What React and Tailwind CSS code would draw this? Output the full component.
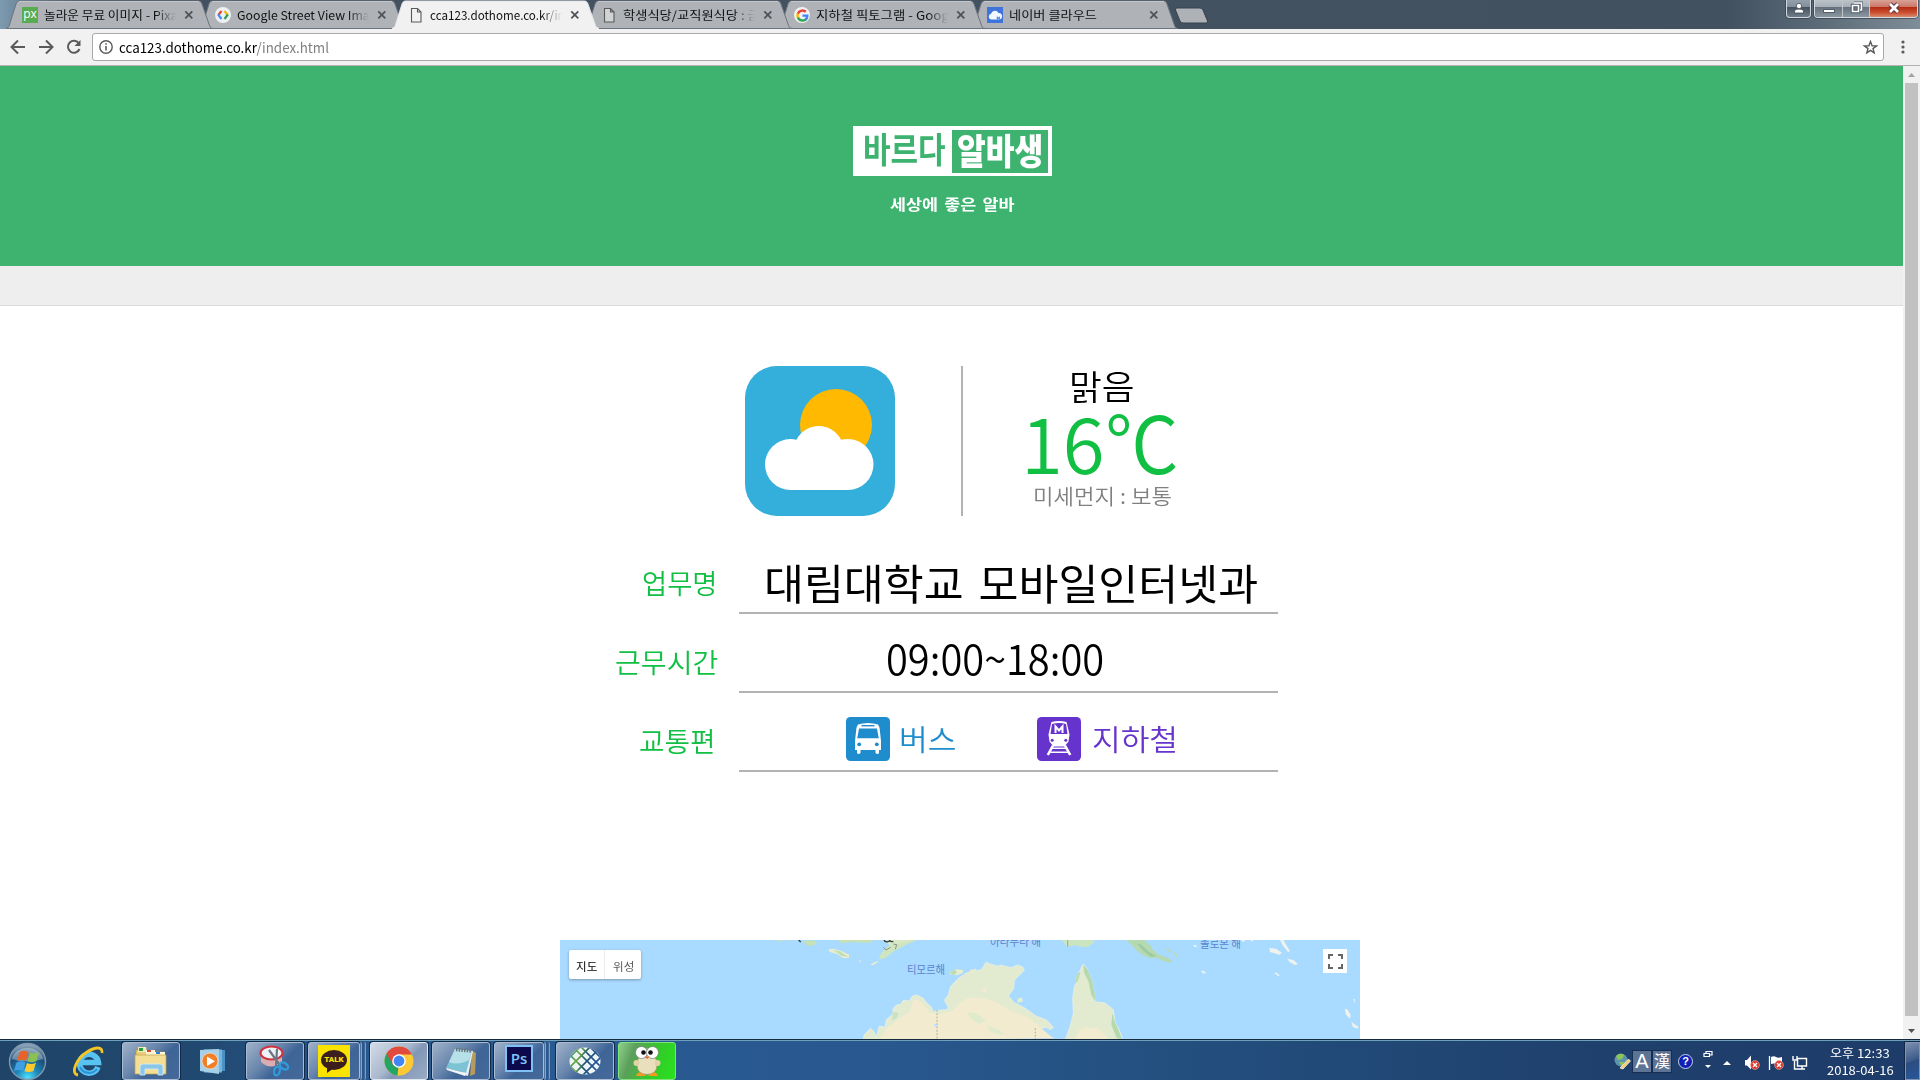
import { useLayoutEffect, useRef, useState } from "react";

const KR = "font-['Noto_Sans_CJK_KR',sans-serif]";

/* Text stretched or condensed to a fixed advance width. */
function Fit({ w, className = "", children }) {
  const ref = useRef(null);
  const [scale, setScale] = useState(1);
  useLayoutEffect(() => {
    setScale(w / ref.current.offsetWidth);
  }, [w]);
  return (
    <span className="flex shrink-0 items-start" style={{ width: w }}>
      <span
        ref={ref}
        className={`block shrink-0 origin-left whitespace-nowrap ${className}`}
        style={{ transform: `scaleX(${scale})` }}
      >
        {children}
      </span>
    </span>
  );
}

/* ---------- browser chrome ---------- */

const PageIcon = () => (
  <svg width="16" height="16" viewBox="0 0 16 16" fill="#f4f4f4" fillOpacity=".5" stroke="#5a5a5a" strokeWidth="1.1">
    <path d="M3.500 1.500h6l3.500 3.500v10h-9.500zM9.500 1.500v3.500h3.500" />
  </svg>
);

const GoogleG = ({ s = 14 }) => (
  <svg width={s} height={s} viewBox="0 0 24 24">
    <path fill="#4285f4" d="M23 12.300c0-.8-.1-1.600-.2-2.300H12v4.500h6.200a5.300 5.300 0 0 1-2.300 3.500v2.900h3.700c2.200-2 3.400-5 3.400-8.600z" />
    <path fill="#34a853" d="M12 23.500c3.100 0 5.700-1 7.600-2.800L15.900 18c-1 .7-2.300 1.100-3.900 1.100-3 0-5.500-2-6.400-4.700H1.800v3A11.500 11.500 0 0 0 12 23.500z" />
    <path fill="#fbbc05" d="M5.600 14.300a7 7 0 0 1 0-4.500v-3H1.800a11.500 11.500 0 0 0 0 10.400z" />
    <path fill="#ea4335" d="M12 5c1.700 0 3.200.6 4.400 1.700l3.300-3.300A11.500 11.500 0 0 0 1.800 6.800l3.800 3C6.500 7.100 9 5 12 5z" />
  </svg>
);

const tabs = [
  {
    title: "놀라운 무료 이미지 - Pixabay",
    w: 155,
    icon: (
      <span className="flex h-4 w-4 items-center justify-center bg-[#59ab52] pb-[2px] font-['Open_Sans',sans-serif] text-[12px] leading-none text-white">
        px
      </span>
    ),
  },
  {
    title: "Google Street View Image",
    w: 146,
    icon: (
      <svg width="16" height="16" viewBox="0 0 16 16" fill="none" strokeWidth="2.200">
        <circle cx="8" cy="8" r="8" fill="#eef1f3" />
        <path d="M6.500 4L3.300 8" stroke="#dd4b39" />
        <path d="M3.100 7.500L6.500 12" stroke="#4a8bf5" />
        <path d="M9.500 4l3.200 4" stroke="#f5b50a" />
        <path d="M12.900 7.500L9.500 12" stroke="#2aa15d" />
      </svg>
    ),
  },
  { title: "cca123.dothome.co.kr/index", w: 154, icon: <PageIcon />, active: true },
  { title: "학생식당/교직원식당 : 금", w: 137, icon: <PageIcon /> },
  {
    title: "지하철 픽토그램 - Google",
    w: 144,
    icon: (
      <span className="flex h-4 w-4 items-center justify-center rounded-full bg-[#f0f2f3]">
        <GoogleG s={13} />
      </span>
    ),
  },
  {
    title: "네이버 클라우드",
    w: 88,
    icon: (
      <svg width="16" height="16" viewBox="0 0 16 16">
        <rect width="16" height="16" fill="#3f74dc" />
        <path d="M4 12.500a3 3 0 0 1 0-5.800 4 4 0 0 1 7.500-.7 3.300 3.300 0 0 1 1 6.500z" fill="#f2f8ff" />
        <path d="M10.300 12.500V9.800l2 2.500V9.600" stroke="#3f74dc" fill="none" />
      </svg>
    ),
  },
];

const zs = ["z-[6]", "z-[5]", "z-[8]", "z-[3]", "z-[2]", "z-[1]"];

function Tab({ tab, i }) {
  return (
    <div className={`relative -mr-[14px] h-[29px] w-[207px] shrink-0 ${zs[i]}`}>
      <svg className="absolute inset-0" width="207" height="29" viewBox="0 0 207 29">
        <path
          d="M0 28.500C3 28 3 26 4 23L10 4C11 1.500 12 1 14 1H192C194 1 195 1.500 196 4L203 24C204 26.500 204 28 207 28.500Z"
          fill={tab.active ? "#f2f1f2" : "#afb2b6"}
          stroke={tab.active ? "#e4e5e7" : "#6c737c"}
          strokeWidth="1"
        />
        {!tab.active && <path d="M13 1.500H193" stroke="#c3c6ca" />}
        {tab.active && <path d="M1 28.500H206" stroke="#f2f1f2" strokeWidth="2" />}
      </svg>
      <div className="relative flex h-[29px] items-center pl-4">
        <div className="w-[22px] pt-px">{tab.icon}</div>
        <div className="w-[132px] overflow-hidden [mask-image:linear-gradient(to_right,black_84%,transparent)]">
          <Fit w={tab.w} className="text-[12px] leading-[19px] text-[#111]">
            {tab.title}
          </Fit>
        </div>
        <svg className="ml-[8px] mt-px" width="10" height="10" viewBox="0 0 10 10" stroke="#4f5358" strokeWidth="1.800">
          <path d="M1.300 1.300l7 7M8.300 1.300l-7 7" />
        </svg>
      </div>
    </div>
  );
}

function TitleBar() {
  return (
    <div className="flex h-[29px] justify-between bg-[linear-gradient(90deg,#7d9ab0_0,#435261_4%,#425160_90%,#5c6c79_95%,#7f8d98_100%)]">
      <div className="flex pl-[6px]">
        {tabs.map((t, i) => (
          <Tab key={t.title} tab={t} i={i} />
        ))}
        <svg className="ml-[9px] mt-[7px]" width="36" height="18" viewBox="0 0 36 18">
          <path d="M4 1H27q2 0 3 2l4.500 11q.8 2-1.500 2H10q-2 0-3-2L2.500 3q-.8-2 1.500-2z" fill="#aeb1b6" stroke="#36424e" strokeWidth="1" />
        </svg>
      </div>
      <div className="flex gap-[3px] pr-[2px]">
        <div className="flex h-[18px] w-[25px] items-center justify-center rounded-b-[4px] border border-t-0 border-[#d3d9de] bg-[linear-gradient(#94a0aa_0,#828e99_42%,#45525f_43%,#717e8a_100%)] pb-[2px] ring-1 ring-[#2d3843]/60">
          <svg width="12" height="12" viewBox="0 0 12 12" fill="#fff" stroke="#3f4853" strokeWidth=".8">
            <path d="M1.500 11V8.500Q3 7 6 7t4.500 1.500V11z" />
            <circle cx="6" cy="4" r="2.700" />
          </svg>
        </div>
        <div className="flex h-[18px] w-[104px] overflow-hidden rounded-b-[4px] border border-t-0 border-[#d3d9de] ring-1 ring-[#2d3843]/60">
          <div className="flex w-[28px] items-end justify-center border-r border-[#c0c8ce] bg-[linear-gradient(#bcc3c9_0,#a6afb7_42%,#66737f_43%,#8a96a0_100%)] pb-[4px]">
            <span className="h-[4px] w-[12px] border border-[#555f6b] bg-white" />
          </div>
          <div className="flex w-[27px] items-center justify-center border-r border-[#c0c8ce] bg-[linear-gradient(#bcc3c9_0,#a6afb7_42%,#66737f_43%,#8a96a0_100%)] pb-[2px]">
            <svg width="13" height="13" viewBox="0 0 13 13" fill="none">
              <path d="M4 2h7.500v7H10" stroke="#505b68" strokeWidth="3" />
              <path d="M2.500 4.500h6v6h-6z" stroke="#505b68" strokeWidth="3.400" />
              <path d="M4 2h7.500v7H10M2.500 4.500h6v6h-6z" stroke="#fff" strokeWidth="1.600" />
            </svg>
          </div>
          <div className="flex flex-1 items-center justify-center bg-[linear-gradient(#d9a297_0,#cb7566_42%,#b42b14_43%,#cc5131_75%,#d98a6f_100%)] pb-[2px]">
            <svg width="14" height="12" viewBox="0 0 14 12">
              <path d="M3 2l8 8M11 2l-8 8" stroke="#58363a" strokeWidth="4.600" />
              <path d="M3 2l8 8M11 2l-8 8" stroke="#fff" strokeWidth="2.800" />
            </svg>
          </div>
        </div>
      </div>
    </div>
  );
}

function Toolbar() {
  return (
    <div className="flex h-[37px] items-center border-b border-[#b4b2b4] bg-[#f2f1f2]">
      <svg className="ml-[10px] shrink-0" width="74" height="18" viewBox="0 0 74 18" fill="none" stroke="#5a5a5a" strokeWidth="2">
        <path d="M15 9H2M8 2.500L1.500 9 8 15.500" />
        <path d="M29 9h13.500M36 2.500L42.500 9l-6.500 6.500" />
        <path d="M69 5.500A6 6 0 1 0 69.500 11" />
        <path d="M70.500 2v6h-6z" fill="#5a5a5a" stroke="none" />
      </svg>
      <div className="ml-[8px] flex h-[28px] w-[1792px] items-center rounded-[3px] border border-[#a9a7a9] bg-white pl-[6px]">
        <svg width="14" height="14" viewBox="0 0 14 14" fill="none" stroke="#5a5a5a" strokeWidth="1.400">
          <circle cx="7" cy="7" r="6.200" />
          <path d="M7 6v4.500M7 3.300v1.500" strokeWidth="1.600" />
        </svg>
        <div className="ml-[6px] flex-1">
          <Fit w={210} className="text-[14px] leading-[20px] text-black">
            cca123.dothome.co.kr<span className="text-[#808080]">/index.html</span>
          </Fit>
        </div>
        <svg className="mr-[5px]" width="15" height="15" viewBox="0 0 15 15" fill="none" stroke="#5a5a5a" strokeWidth="1.400">
          <path d="M7.500 1.500l1.600 4.200 4.400.2-3.500 2.700 1.200 4.300-3.700-2.500-3.700 2.500L5 8.600 1.500 5.900l4.400-.2z" />
        </svg>
      </div>
      <svg className="ml-[17px]" width="4" height="14" viewBox="0 0 4 14" fill="#5a5a5a">
        <circle cx="2" cy="2" r="1.600" />
        <circle cx="2" cy="7" r="1.600" />
        <circle cx="2" cy="12" r="1.600" />
      </svg>
    </div>
  );
}

function Scrollbar() {
  return (
    <div className="flex w-[17px] shrink-0 flex-col items-center bg-[#f1f1f1]">
      <div className="flex h-[17px] items-center">
        <svg width="7" height="4" viewBox="0 0 7 4" fill="#a3a3a3">
          <path d="M0 4L3.500 0 7 4z" />
        </svg>
      </div>
      <div className="h-[933px] w-[13px] bg-[#c1c1c1]" />
      <div className="mt-auto flex h-[17px] items-center">
        <svg width="7" height="4" viewBox="0 0 7 4" fill="#505050">
          <path d="M0 0L3.500 4 7 0z" />
        </svg>
      </div>
    </div>
  );
}

/* ---------- page ---------- */

function Hero() {
  return (
    <>
      <header className="flex h-[200px] flex-col items-center bg-[#3eb370] pt-[60px]">
        <div className="ml-[2px] flex h-[50px] w-[199px] items-center bg-white">
          <div className="flex w-[99px] pb-[6px] pl-[10px]">
            <Fit w={83} className="text-[35px] font-bold leading-[42px] text-[#3eb370]">
              바르다
            </Fit>
          </div>
          <div className="flex h-[43px] w-[96px] items-center bg-[#3eb370] pb-[5px] pl-[5px]">
            <Fit w={86} className="text-[36px] font-black leading-[38px] text-white">
              알바생
            </Fit>
          </div>
        </div>
        <div className="mt-[16px]">
          <Fit w={124} className="text-[15px] font-bold leading-[24px] text-white [word-spacing:2px]">
            세상에 좋은 알바
          </Fit>
        </div>
      </header>
      <div className="h-[40px] border-b border-[#dcdcdc] bg-[#eeeeee]" />
    </>
  );
}

function Weather() {
  return (
    <section className="flex pl-[745px] pt-[60px]">
      <svg width="150" height="150" viewBox="0 0 150 150">
        <rect width="150" height="150" rx="32" fill="#34aeda" />
        <circle cx="91" cy="59" r="36" fill="#ffb900" />
        <path d="M45.500 124a25.500 25.500 0 0 1 0-51q3 0 6 .7a25 25 0 0 1 44.500 0q3-.7 7-.7a25.500 25.500 0 0 1 0 51z" fill="#fff" />
      </svg>
      <div className="ml-[66px] h-[150px] w-[2px] bg-[#b3b3b3]" />
      <div className="flex flex-col">
        <div className="ml-[106px] h-[47px]">
          <Fit w={66} className="text-[34px] font-[350] leading-[39px] text-black">
            맑음
          </Fit>
        </div>
        <div className="-mt-[8px] ml-[58px] flex h-[75px] items-start text-[#11bf43]">
          <Fit w={84} className="text-[78px] font-[350] leading-[70px]">
            16
          </Fit>
          <Fit w={74} className="text-[78px] font-[350] leading-[70px]">
            ℃
          </Fit>
        </div>
        <div className="ml-[70px] h-[33px]">
          <Fit w={139} className="text-[21px] font-[350] leading-[30px] text-[#808080]">
            미세먼지 : 보통
          </Fit>
        </div>
      </div>
    </section>
  );
}

const BusIcon = () => (
  <svg width="44" height="44" viewBox="0 0 44 44">
    <rect width="44" height="44" rx="4.500" fill="#1f8ccd" />
    <path d="M12 7.500q10-3 20 0l1.500 3L35 24v9h-2v3q-1.500 1.800-3.500 0v-3h-15v3q-1.800 1.800-3.500 0v-3H9v-9l1.500-13.500z" fill="#fff" />
    <path d="M15.500 8.700h13" stroke="#1f8ccd" strokeWidth="1.400" />
    <path d="M13 11.500h18l1.800 9.700H11.200z" fill="#1f8ccd" />
    <circle cx="13.200" cy="27.300" r="1.900" fill="#1f8ccd" />
    <circle cx="30.800" cy="27.300" r="1.900" fill="#1f8ccd" />
  </svg>
);

const TrainIcon = () => (
  <svg width="44" height="44" viewBox="0 0 44 44">
    <rect width="44" height="44" rx="4.500" fill="#6633cc" />
    <path d="M14.500 5q7.500-1.800 15 0l3 12.500-1 7-4 5h-11l-4-5-1-7z" fill="#fff" />
    <path d="M15 7q7-2 14 0l1.500 10H13.500z" fill="#6633cc" />
    <path d="M18.500 16V9.500l3.500 4 3.500-4V16" fill="none" stroke="#fff" strokeWidth="2" />
    <circle cx="15.200" cy="23.300" r="1.500" fill="#6633cc" />
    <circle cx="28.800" cy="23.300" r="1.500" fill="#6633cc" />
    <path d="M16 28.500L10.800 38M28 28.500l5.200 9.500" stroke="#fff" strokeWidth="2.600" />
    <path d="M15 31.200h14M13 35.200h18" stroke="#fff" strokeWidth="1.400" />
  </svg>
);

function Row({ label, w, right, children }) {
  return (
    <div className="flex h-[79px] items-end">
      <div className="flex w-[179px] justify-end" style={{ paddingRight: right }}>
        <Fit w={w} className="text-[27px] font-[350] leading-[62px] text-[#11bf43]">
          {label}
        </Fit>
      </div>
      <div className="flex h-[70px] w-[539px] border-b-2 border-[#b3b3b3]">{children}</div>
    </div>
  );
}

function Details() {
  return (
    <section className="flex flex-col pl-[560px] pt-[19px]">
      <Row label="업무명" w={76} right={21}>
        <div className="pl-[25px]">
          <Fit w={494} className="text-[42px] font-normal leading-[75px] text-black [word-spacing:5px]">
            대림대학교 모바일인터넷과
          </Fit>
        </div>
      </Row>
      <Row label="근무시간" w={103} right={21}>
        <div className="pl-[147px]">
          <Fit w={218} className="text-[42px] font-[350] leading-[68px] text-black">
            09:00~18:00
          </Fit>
        </div>
      </Row>
      <Row label="교통편" w={77} right={23}>
        <div className="flex pl-[107px] pt-[15px]">
          <BusIcon />
          <div className="ml-[9px] w-[138px]">
            <Fit w={57} className="text-[29px] font-[350] leading-[42px] text-[#1f8ccd]">
              버스
            </Fit>
          </div>
          <TrainIcon />
          <div className="ml-[11px]">
            <Fit w={86} className="text-[29px] font-[350] leading-[42px] text-[#6633cc]">
              지하철
            </Fit>
          </div>
        </div>
      </Row>
    </section>
  );
}

function GoogleMap() {
  return (
    <div className="relative ml-[560px] mt-auto h-[99px] w-[800px] overflow-hidden bg-[#a9daff]">
      <svg className="absolute inset-0" width="800" height="99" viewBox="0 0 800 99">
        <g transform="translate(390 -20) scale(.33333)">
          <path
            d="M-260 360l2-15 20-20 10 10 6 17 10-34 17 4 2-12 3-12 18-15 2-18 10-10 12-2 8-12 18 2 8-14 14-4 20 10 10 14 14 12 6 16 12-6 28-2 5-8-12-20 12-16 6-24 24-26 24-16 45-10 14-22 10 4 25 8 10-4 30 8 20-8 15 6 5 10-18 18-12 12-2 25-16 22 18 20 30 15 35 25 32 12 20 22z"
            fill="#e2ebcf"
            stroke="#f0f1e6"
            strokeWidth="2"
          />
          <path d="M-215 360l25-35 40-30 30-20 10-38 24 8 16 20 10 14 30 2 40-8 15-20 30-20 40 0 45 14 40 25 55 20 35 30 35 28 10 5z" fill="#f2ebcf" />
          <path d="M50 275l30 5 28 22-20 10-25-15zM110 315l40 16 12 14-40-8z" fill="#e0ebcd" />
          <path d="M-172 275l18 4-4 12-15 12z" fill="#c8e3c1" />
          <path d="M95 208l8-4 10 8-10 6z" fill="#f2ebcf" />
          <path d="M345 360l15-40 10-40-2-45 5-35 5-10 2-20 8-15 12-23 10 13 15 35 7 35 3 30 30 4 25 20 5 36 15 30 8 25z" fill="#e2ebcf" stroke="#f0f1e6" strokeWidth="2" />
          <path d="M400 134l12 14 14 33 7 34 3 28-12-18-8-38-14-30zM487 280l8 26 13 30 8 22-16-4-16-40z" fill="#b5d9ae" />
          <path d="M376 190l4-24 8-10 3 4-8 24z" fill="#b9dcb4" />
          <path d="M375 357l10-24 25-14 10 8 20-6 28 28 4 8z" fill="#f2ebcf" />
          <path d="M203 236l12-4 4 12-16 5zM292 328l12-6 8 2-12 6zM0 155l20-7 20 2-2 10-18 6-22-4zM58 150l20-4 2 10-18 2z" fill="#e6eccf" />
          <path d="M-2 158l14-8 10 6-10 9z" fill="#b9dcb4" />
          <path d="M256 325v32M-39 270v90" stroke="#999c94" strokeWidth="2.500" strokeDasharray="5 5" />
          <path d="M-49 315l10-4v10z" fill="#a9daff" />
          <path d="M335 60h95l2 8-22 14-15-2-20-4-24 4z" fill="#cbe5c0" />
          <path d="M353 60v20" stroke="#8b9d85" strokeWidth="2.500" />
          <path d="M530 60h52l18 14 6 12 20 18 18 6 22 10-4 8-24-6-16-8-20 0-20-6-24-18-14-16z" fill="#b5d9b0" />
          <path d="M560 70l14 4 20 20 25 14-18 2-24-20z" fill="#9ecba0" />
          <path d="M645 85l12 2 10 10-14-5zM668 92l18 16-8 2z" fill="#b9dcb4" />
          <path d="M728 74l12 2 0 6-6-2zM752 154l8-2 8 6-6 3zM990 60h10l20 34-6 2-16-20zM958 84l20 2 18 12-8 6-28-8zM1012 116l18 4 14 12-10 3-16-10zM972 158l8 0 10 8-6 2zM1184 266l8 2 10 16-2 12-12-12zM1204 304l8 8 14 8-4 6-14-6zM1210 236l5 2-2 12zM872 60l14 0-6 6zM902 60h8l-4 6z" fill="#f0f2ed" />
          <path d="M-365 88l16-2 26 8 20 10 0 10-18 0-18-12-22-6zM-240 134l22-12 2 4-16 10zM-275 122l10 0-4 5z" fill="#e9edd0" />
          <path d="M-350 90l20 4 24 16-20-2z" fill="#c0dfb3" />
          <path d="M-525 60h20l2 6-10-2zM-490 60h12l-2 5zM-440 64l22-4 15 4 4 8-20 6-14-4zM-338 60h110l-12 8-30 0-24-2-30 4z" fill="#c4e1b7" />
          <path d="M-214 116l8-18 26-24 20-14h60l-40 18-26 14-18 14-14 10z" fill="#cfe5bd" />
          <path d="M-200 60h90l-40 10-30 6z" fill="#d8e9c6" />
          <path d="M-200 82l8 8 14-8M-170 72l10 2-4 14" stroke="#8f9489" fill="none" strokeWidth="3" />
          <path d="M-198 60q3 7 12 5t4-5M-182 60q4 7 12 4M-454 60l6 6" stroke="#31383e" fill="none" strokeWidth="4" />
        </g>
        <g className="font-['Noto_Sans_CJK_KR',sans-serif] text-[11px]" fill="#5a83ce">
          <text x="347" y="34" textLength="38" lengthAdjust="spacingAndGlyphs">티모르해</text>
          <text x="430" y="6" textLength="51" lengthAdjust="spacingAndGlyphs">아라푸라 해</text>
          <text x="640" y="8" textLength="41" lengthAdjust="spacingAndGlyphs">솔로몬 해</text>
        </g>
      </svg>
      <div className="absolute left-[9px] top-[10px] flex h-[29px] w-[72px] items-center rounded-[2px] bg-white shadow-[0_1px_3px_rgba(0,0,0,0.3)]">
        <div className="flex h-full w-[36px] items-center justify-center border-r border-[#ececec] pt-[2px]">
          <Fit w={21} className="text-[11px] leading-[20px] text-black">
            지도
          </Fit>
        </div>
        <div className="flex w-[36px] justify-center pt-[2px]">
          <Fit w={21} className="text-[11px] leading-[20px] text-[#565656]">
            위성
          </Fit>
        </div>
      </div>
      <div className="absolute left-[763px] top-[9px] flex h-[24px] w-[24px] items-center justify-center bg-white">
        <svg width="15" height="15" viewBox="0 0 15 15" fill="none" stroke="#666" strokeWidth="2">
          <path d="M1 5V1h4M10 1h4v4M14 10v4h-4M5 14H1v-4" />
        </svg>
      </div>
    </div>
  );
}

/* ---------- taskbar ---------- */

function Slot({ className = "", children }) {
  return <div className={`flex h-[38px] shrink-0 items-center justify-center ${className}`}>{children}</div>;
}

const RUN =
  "rounded-[3px] border border-[#a9bcd3] bg-[linear-gradient(135deg,#9fb1c9_0,#6885ac_40%,#3f6597_60%,#44699a_100%)] ring-1 ring-[#12294a]";

function StartOrb() {
  return (
    <svg width="39" height="39" viewBox="0 0 39 39">
      <defs>
        <radialGradient id="orb" cx=".5" cy=".95" r=".9">
          <stop offset="0" stopColor="#4fe3ff" />
          <stop offset=".35" stopColor="#1c86b8" />
          <stop offset=".7" stopColor="#1c4d78" />
          <stop offset="1" stopColor="#8ba3b8" />
        </radialGradient>
      </defs>
      <circle cx="19.500" cy="19.500" r="18" fill="url(#orb)" stroke="#7f98ae" strokeWidth="1.400" />
      <path d="M4 17a16 15 0 0 1 31 0q-15 5-31 0z" fill="#dbe6ee" opacity=".4" />
      <path d="M11.500 10q4.500-2.500 9 0L18 19q-4.500-2.500-9 0z" fill="#e8632a" />
      <path d="M22 10.500q4.500 2 9-.5L28.500 19q-4.500 2.500-9 .3z" fill="#8cc152" />
      <path d="M8.500 20.500q4.500-2.500 9 0L15 29q-4.500-2-9 0z" fill="#3f9fe0" />
      <path d="M19 21q4.500 2.300 9-.5L25.500 29q-4.500 2-9 .3z" fill="#fcc92f" />
    </svg>
  );
}

const IeIcon = () => (
  <svg width="32" height="32" viewBox="0 0 32 32" fill="none">
    <path d="M26 22A9.500 9.500 0 1 1 26.500 17.500H10" stroke="#58c2f0" strokeWidth="5.500" />
    <path d="M25 24A10 10 0 0 1 8 22" stroke="#2b93d6" strokeWidth="2" />
    <path d="M6 30C-2 29 4 14 15 7c8-5 16-6 15 1" stroke="#f5c524" strokeWidth="2.800" />
  </svg>
);

const FolderIcon = () => (
  <svg width="34" height="30" viewBox="0 0 34 30">
    <path d="M2 4h8l2 2h18v20H2z" fill="#e9cf7c" stroke="#b7943e" strokeWidth=".7" />
    <path d="M4 1h8l1 5H4z" fill="#f5e9b8" />
    <path d="M5 2h4v3H5z" fill="#2b9e3d" />
    <path d="M12 4h9v5h-9z" fill="#fbf2cf" />
    <path d="M13 4h4v2h-4z" fill="#d44a31" />
    <path d="M20 6h11v5H20z" fill="#fff7dc" />
    <path d="M22 6h4v2h-4z" fill="#2c7fd1" />
    <path d="M1 9h31v19H1z" fill="#f4de93" stroke="#c4a24b" strokeWidth=".7" />
    <path d="M6 29v-8q0-3 3-3h17q3 0 3 3v8h-5v-6H11v6z" fill="#8ac6e8" stroke="#d7effb" strokeWidth=".8" />
  </svg>
);

const MediaIcon = () => (
  <svg width="27" height="27" viewBox="0 0 27 27">
    <path d="M9 2h17v21H9z" fill="#4a91c5" />
    <path d="M5 1.500h18v23H5z" fill="#75b4dc" />
    <path d="M1 2l19-1v25L1 23z" fill="#a6cfe8" />
    <circle cx="11" cy="13" r="8" fill="#f07f28" stroke="#fff" strokeOpacity=".5" />
    <path d="M8 8.500v9.500l8-4.800z" fill="#fff" />
  </svg>
);

const ScissorsIcon = () => (
  <svg width="32" height="32" viewBox="0 0 32 32" fill="none">
    <path d="M2 8v9q10 9 21 0V8z" fill="#d9adb2" />
    <ellipse cx="12.500" cy="8" rx="11" ry="6.500" fill="#eef1f5" stroke="#cf3440" strokeWidth="2.200" />
    <path d="M10 5l10 14M18 4l-1 17" stroke="#6b7683" strokeWidth="2.200" />
    <ellipse cx="25" cy="21" rx="4.500" ry="3" transform="rotate(35 25 21)" stroke="#2f9bdb" strokeWidth="2.300" />
    <ellipse cx="18" cy="26" rx="2.800" ry="4.500" transform="rotate(15 18 26)" stroke="#2f9bdb" strokeWidth="2.300" />
  </svg>
);

const TalkIcon = () => (
  <div className="relative flex h-8 w-8 items-center justify-center bg-[#fbe300]">
    <svg className="absolute inset-0" width="32" height="32" viewBox="0 0 32 32" fill="#3b1e1e">
      <ellipse cx="16" cy="15" rx="13" ry="10" />
      <path d="M9 21v7l7-5z" />
    </svg>
    <span className="relative -mt-[3px] font-['Roboto',sans-serif] text-[8px] font-black leading-none text-[#fbe300]">TALK</span>
  </div>
);

const ChromeIcon = () => (
  <svg width="30" height="30" viewBox="0 0 30 30">
    <circle cx="15" cy="15" r="14.500" fill="#fcc934" />
    <path d="M15 15L2.400 7.700A14.500 14.500 0 0 0 13.500 29.400l7.800-10.800z" fill="#22a565" />
    <path d="M15 .5A14.500 14.500 0 0 0 2.400 7.700L9 19l6-10.500h13A14.500 14.500 0 0 0 15 .5z" fill="#e04a3f" />
    <path d="M15 29.500L21.300 18.600 15 15v0l-1.500 14.400z" fill="#fcc934" />
    <circle cx="15" cy="15" r="6.800" fill="#fff" />
    <circle cx="15" cy="15" r="5.400" fill="#4285f4" />
  </svg>
);

const NoteIcon = () => (
  <svg width="32" height="31" viewBox="0 0 32 31">
    <path d="M27 5l4 2-1 21-5 2z" fill="#b79a5d" />
    <path d="M11 4l17 1-5 25-4-1z" fill="#e8edf0" />
    <path d="M10 3l17 2-6 22L1 22z" fill="#7ec3d4" />
    <path d="M10 3l17 2-3 9Q12 20 4 16z" fill="#b6e1e8" />
    <path d="M1 22l20 5-1 3L2 24z" fill="#f2f5f6" />
    <path d="M11 3.500l16 1.500" stroke="#69747b" strokeWidth="3.500" strokeDasharray="1.500 1.200" />
  </svg>
);

const EarthIcon = () => (
  <svg width="32" height="28" viewBox="0 0 32 28">
    <defs>
      <clipPath id="globe">
        <ellipse cx="16" cy="14" rx="15.500" ry="13.500" />
      </clipPath>
      <linearGradient id="weave" gradientUnits="userSpaceOnUse" x1="0" y1="0" x2="32" y2="10">
        <stop offset="0" stopColor="#2d8f9c" />
        <stop offset=".35" stopColor="#6aa83a" />
        <stop offset=".6" stopColor="#1d5277" />
        <stop offset="1" stopColor="#2455a0" />
      </linearGradient>
    </defs>
    <g clipPath="url(#globe)">
      <rect width="32" height="28" fill="#eef3f6" />
      <path
        d="M-8 10L16 34M-1 6L25 32M4 0L36 32M12 0L36 24M21 0L36 15M-4 15L14-3M-4 25L24-3M2 30L34-2M12 30L38 4M22 30L38 14"
        stroke="url(#weave)"
        strokeWidth="1.700"
      />
    </g>
  </svg>
);

const OwlIcon = () => (
  <svg width="28" height="31" viewBox="0 0 28 31">
    <path d="M3 30q1-4 6-4l4 4zM25 30q-1-4-6-4l-4 4z" fill="#f59a1b" />
    <path d="M7 9h14q3 5 3 10 0 9-10 9.500Q4 28 4 19 4 14 7 9z" fill="#eadfbd" stroke="#a3906a" strokeWidth=".7" />
    <circle cx="3.500" cy="17" r="3" fill="#e0d3ab" />
    <circle cx="24.500" cy="17" r="3" fill="#e0d3ab" />
    <circle cx="8.500" cy="6.500" r="6" fill="#fff" stroke="#666" strokeWidth=".6" />
    <circle cx="19.500" cy="6.500" r="6" fill="#fff" stroke="#666" strokeWidth=".6" />
    <circle cx="10.500" cy="6.500" r="2.300" fill="#111" />
    <circle cx="17.500" cy="6.500" r="2.300" fill="#111" />
    <path d="M11.500 10.500h5L14 13z" fill="#e3642a" />
  </svg>
);

const Stack = () => (
  <div className="flex h-[38px] w-[6px] shrink-0 justify-between">
    <span className="w-[2px] rounded-r border-r border-[#8ba5c4] bg-[#4f739f]" />
    <span className="w-[2px] rounded-r border-r border-[#7f9bbd] bg-[#41689a]" />
  </div>
);

function Tray() {
  return (
    <div className="ml-auto flex h-[38px] items-center">
      <svg width="17" height="17" viewBox="0 0 17 17">
        <circle cx="7" cy="7" r="6.500" fill="#5c94ae" />
        <path d="M2 3q4-4 8-1l-2 4-4 1zM5 9l5 0-2 5z" fill="#8fc653" />
        <path d="M6 15l8.500-9 2 2L9 16z" fill="#f3ce6b" stroke="#fff" strokeWidth=".7" />
      </svg>
      <div className="ml-[1px] flex h-[23px] text-white">
        <div className="flex w-[20px] items-center justify-center border border-[#152d52] bg-[#5d7494] font-['Liberation_Sans',sans-serif] text-[20px] leading-none">A</div>
        <div className="flex w-[20px] items-center justify-center border border-[#152d52] bg-[#5d7494] pb-[2px] text-[16px] leading-[20px]">漢</div>
      </div>
      <div className="ml-[6px] flex h-[15px] w-[15px] items-center justify-center rounded-full border border-[#c6d2ea] bg-[#1020b4] font-['Liberation_Sans',sans-serif] text-[11px] font-bold leading-none text-white">
        ?
      </div>
      <svg className="-mt-[2px] ml-[10px]" width="10" height="20" viewBox="0 0 10 20" fill="none" stroke="#fff" strokeWidth="1.200">
        <path d="M3 3V1.500h6V5H7M1 3.500h5.500v3H1z" />
        <path d="M2 15h6l-3 3z" fill="#fff" stroke="none" />
      </svg>
      <svg className="ml-[10px] mt-[4px]" width="8" height="4" viewBox="0 0 8 4" fill="#fff">
        <path d="M0 4l4-4 4 4z" />
      </svg>
      <svg className="ml-[13px] mt-[4px]" width="66" height="17" viewBox="0 0 66 17">
        <path d="M1 5h2l4-4.500v14L3 10.500H1z" fill="#fff" />
        <path d="M25.500 1v14" stroke="#fff" strokeWidth="1.300" />
        <path d="M27 2q3-1.500 5 0t6 0v7q-3 1-5.500 0T27 9z" fill="#fff" />
        {[11, 35].map((x) => (
          <g key={x}>
            <circle cx={x} cy="10" r="4.400" fill="#d9382c" stroke="#f5b3a8" strokeWidth=".6" />
            <path d={`M${x - 2} 8l4 4M${x + 2} 8l-4 4`} stroke="#fff" strokeWidth="1.400" />
          </g>
        ))}
        <path d="M53.500 3.500h9v7.500h-9zM54 14h7M58 11v3M50.500 6v8H54M49 1v4h4V1" fill="none" stroke="#fff" strokeWidth="1.400" />
      </svg>
      <div className="ml-[14px] flex w-[72px] flex-col items-center text-white">
        <Fit w={60} className="text-[12px] leading-[17px]">오후 12:33</Fit>
        <Fit w={67} className="text-[12px] leading-[17px]">2018-04-16</Fit>
      </div>
      <div className="ml-[9px] h-[38px] w-[15px] border border-[#8095b3] bg-[linear-gradient(160deg,#7b8fae_0,#3a5888_50%,#2c4c7f_51%,#27579a_100%)] ring-1 ring-[#122846]" />
    </div>
  );
}

function Taskbar() {
  return (
    <footer className="flex h-[41px] items-end border-t border-[#16283c] bg-[linear-gradient(90deg,#1f4468_0,#21486f_10%,#295a92_20%,#295890_45%,#23507f_60%,#1f3f6c_85%,#1e3c69_100%)] shadow-[inset_0_1px_0_#6ea0bb]">
      <Slot className="ml-[7px] w-[40px]"><StartOrb /></Slot>
      <Slot className="ml-[23px] w-[36px]"><IeIcon /></Slot>
      <Slot className={`ml-[16px] w-[58px] ${RUN}`}><FolderIcon /></Slot>
      <Slot className="w-[64px]"><MediaIcon /></Slot>
      <Slot className={`ml-[2px] w-[58px] ${RUN}`}><ScissorsIcon /></Slot>
      <Slot className={`ml-[4px] w-[52px] ${RUN}`}><TalkIcon /></Slot>
      <Stack />
      <Slot className="ml-[4px] w-[58px] rounded-[3px] border border-[#dfe6ee] bg-[linear-gradient(135deg,#d3dbe6_0,#a9b8cd_45%,#8297b6_60%,#9aacc5_100%)] ring-1 ring-[#12294a]"><ChromeIcon /></Slot>
      <Slot className={`ml-[4px] w-[58px] ${RUN}`}><NoteIcon /></Slot>
      <Slot className={`ml-[4px] w-[50px] ${RUN}`}>
        <div className="mb-[6px] flex h-[27px] w-[28px] items-center justify-center border-2 border-[#7fc0f5] bg-[#0c0a4c] font-['Open_Sans',sans-serif] text-[15px] font-semibold leading-none text-[#82c5f7]">Ps</div>
      </Slot>
      <Stack />
      <Slot className={`ml-[6px] w-[58px] ${RUN}`}><EarthIcon /></Slot>
      <Slot className="ml-[4px] w-[58px] rounded-[3px] border border-[#7fe57b] bg-[linear-gradient(110deg,#8fd08b_0,#5b9f5b_25%,#33c92a_60%,#2ae21f_100%)]"><OwlIcon /></Slot>
      <Tray />
    </footer>
  );
}

export default function App() {
  return (
    <div className={`flex h-[1080px] w-[1920px] flex-col overflow-hidden bg-white ${KR}`}>
      <TitleBar />
      <Toolbar />
      <div className="flex h-[973px]">
        <main className="flex w-[1903px] flex-col">
          <Hero />
          <Weather />
          <Details />
          <GoogleMap />
        </main>
        <Scrollbar />
      </div>
      <Taskbar />
    </div>
  );
}
